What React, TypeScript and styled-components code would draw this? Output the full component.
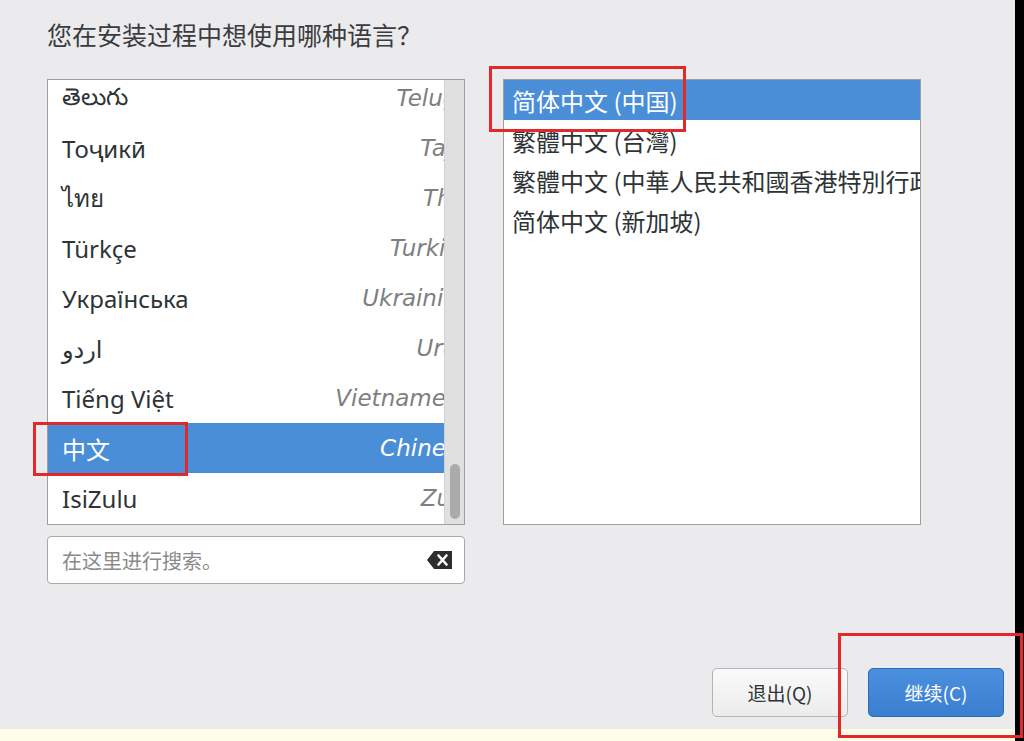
import React from 'react';
import styled, { createGlobalStyle } from 'styled-components';

const Global = createGlobalStyle`
  html, body { margin:0; padding:0; }
  body { font-family: "Noto Sans", "Noto Sans CJK SC", "DejaVu Sans", sans-serif; }
`

const Frame = styled.div`
  position: relative;
  display: flex;
  width: 1024px;
  height: 741px;
  overflow: hidden;
`
const Main = styled.div`
  flex: 1;
  display: flex;
  flex-direction: column;
  background: #ebebed;
`
const Edge = styled.div`
  width: 9px;
  background: #000;
`
const Body = styled.div`
  flex: 1;
  display: flex;
  flex-direction: column;
  padding: 19px 11px 11px 47px;
`
const Strip = styled.div`
  height: 12px;
  background: #fdfdea;
  border-top: 1px solid #ececdc;
`
const Title = styled.h1`
  margin: 0;
  font-family: "Noto Sans CJK SC", sans-serif;
  font-size: 25px;
  font-weight: 400;
  line-height: 31px;
  color: #3a3c3e;
`
const Columns = styled.div`
  display: flex;
  gap: 38px;
  margin-top: 29px;
`
const LeftCol = styled.div`
  display: flex;
  flex-direction: column;
  gap: 11px;
  width: 418px;
`
const ListBox = styled.div`
  box-sizing: border-box;
  width: 418px;
  height: 446px;
  border: 1px solid #9e9e9e;
  background: #fff;
  display: flex;
  overflow: hidden;
`
const Viewport = styled.div`
  flex: 1;
  overflow: hidden;
`
const Rows = styled.div`
  margin-top: -7px;
  width: 432px;
`
const LangRow = styled.div<{ $selected?: boolean }>`
  box-sizing: border-box;
  height: 50px;
  display: flex;
  align-items: center;
  justify-content: space-between;
  padding: 0 8px 0 14px;
  background: ${p => (p.$selected ? '#4a8ed8' : 'transparent')};
  color: ${p => (p.$selected ? '#fff' : '#2e3436')};
  white-space: nowrap;
`
const Native = styled.span`
  font-size: 24px;
`
const English = styled.span<{ $selected?: boolean }>`
  font-family: "DejaVu Sans", sans-serif;
  font-size: 23px;
  font-style: italic;
  color: ${p => (p.$selected ? '#fff' : '#7d7f82')};
`
const Trough = styled.div`
  width: 19px;
  background: #e0e0e0;
  border-left: 1px solid #d2d2d2;
  display: flex;
  flex-direction: column;
  justify-content: flex-end;
  align-items: center;
  padding-bottom: 5px;
`
const Thumb = styled.div`
  width: 10px;
  height: 55px;
  border-radius: 5px;
  background: #ababab;
`
const Search = styled.div`
  box-sizing: border-box;
  height: 48px;
  border: 1px solid #a8a8a8;
  border-radius: 4px;
  background: #fff;
  display: flex;
  align-items: center;
  justify-content: space-between;
  padding: 0 12px 0 14px;
`
const Placeholder = styled.span`
  font-family: "Noto Sans CJK SC", sans-serif;
  font-size: 20px;
  color: #8a8a8a;
`
const LocaleRow = styled.div<{ $selected?: boolean }>`
  height: 40px;
  display: flex;
  align-items: center;
  padding-left: 8px;
  font-family: "Noto Sans CJK SC", sans-serif;
  font-size: 24px;
  white-space: nowrap;
  background: ${p => (p.$selected ? '#4a8ed8' : 'transparent')};
  color: ${p => (p.$selected ? '#fff' : '#2e3436')};
`
const Footer = styled.div`
  margin-top: auto;
  display: flex;
  justify-content: flex-end;
  gap: 20px;
`
const Button = styled.button<{ $primary?: boolean }>`
  width: 136px;
  height: 49px;
  border-radius: 5px;
  font-family: "Noto Sans CJK SC", sans-serif;
  font-size: 19px;
  cursor: pointer;
  border: 1px solid ${p => (p.$primary ? '#2d6bb8' : '#b4b4b4')};
  color: ${p => (p.$primary ? '#fff' : '#2e3436')};
  background: ${p =>
    p.$primary
      ? 'linear-gradient(#4b90de, #3a7fd0)'
      : 'linear-gradient(#fafafa, #ececec)'};
`
const Mark = styled.div<{ $x: number; $y: number; $w: number; $h: number }>`
  position: absolute;
  left: ${p => p.$x}px;
  top: ${p => p.$y}px;
  width: ${p => p.$w}px;
  height: ${p => p.$h}px;
  box-sizing: border-box;
  border: 3px solid #e3282a;
  pointer-events: none;
`

const languages = [
  { native: 'తెలుగు', english: 'Telugu' },
  { native: 'Тоҷикӣ', english: 'Tajik' },
  { native: 'ไทย', english: 'Thai' },
  { native: 'Türkçe', english: 'Turkish' },
  { native: 'Українська', english: 'Ukrainian' },
  { native: 'اردو', english: 'Urdu' },
  { native: 'Tiếng Việt', english: 'Vietnamese' },
  { native: '中文', english: 'Chinese', selected: true },
  { native: 'IsiZulu', english: 'Zulu' },
]

const locales = [
  '简体中文 (中国)',
  '繁體中文 (台灣)',
  '繁體中文 (中華人民共和國香港特別行政區)',
  '简体中文 (新加坡)',
]

function ClearIcon() {
  return (
    <svg width="25" height="18" viewBox="0 0 25 18">
      <path d="M7 0 H25 V18 H7 L0 9 Z" fill="#2e2e2e" />
      <path d="M11.5 4.5 L19.5 13.5 M19.5 4.5 L11.5 13.5" stroke="#fff" strokeWidth="2.6" strokeLinecap="round" />
    </svg>
  )
}

export default function App() {
  return (
    <Frame>
      <Global />
      <Main>
        <Body>
          <Title>您在安装过程中想使用哪种语言？</Title>
          <Columns>
            <LeftCol>
              <ListBox>
                <Viewport>
                  <Rows>
                    {languages.map(l => (
                      <LangRow key={l.english} $selected={l.selected}>
                        <Native>{l.native}</Native>
                        <English $selected={l.selected}>{l.english}</English>
                      </LangRow>
                    ))}
                  </Rows>
                </Viewport>
                <Trough>
                  <Thumb />
                </Trough>
              </ListBox>
              <Search>
                <Placeholder>在这里进行搜索。</Placeholder>
                <ClearIcon />
              </Search>
            </LeftCol>
            <ListBox>
              <Viewport>
                {locales.map((name, i) => (
                  <LocaleRow key={name} $selected={i === 0}>{name}</LocaleRow>
                ))}
              </Viewport>
            </ListBox>
          </Columns>
          <Footer>
            <Button>退出(Q)</Button>
            <Button $primary>继续(C)</Button>
          </Footer>
        </Body>
        <Strip />
      </Main>
      <Edge />
      <Mark $x={489} $y={66} $w={197} $h={66} />
      <Mark $x={33} $y={422} $w={155} $h={54} />
      <Mark $x={838} $y={633} $w={185} $h={105} />
    </Frame>
  )
}
